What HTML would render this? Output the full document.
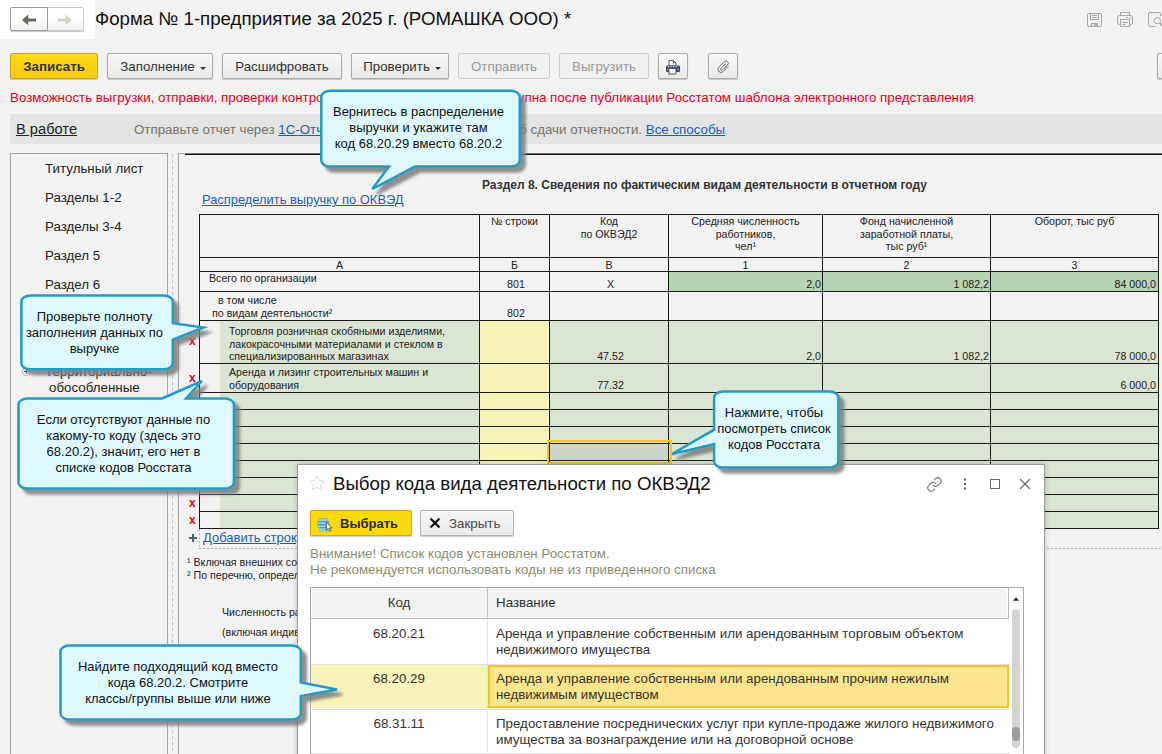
<!DOCTYPE html>
<html lang="ru">
<head>
<meta charset="utf-8">
<title>Форма № 1-предприятие</title>
<style>
html,body{margin:0;padding:0;}
body{width:1162px;height:754px;overflow:hidden;position:relative;background:#f2f2f2;font-family:"Liberation Sans",sans-serif;color:#222;}
.abs{position:absolute;}
#whitebox{left:0;top:0;width:95px;height:39px;background:#fff;}
.navbtn{top:7px;height:24px;border:1px solid #bdbdbd;background:linear-gradient(#ffffff 50%,#eeeeee);box-sizing:border-box;box-shadow:0 1px 0 #c8c8c8;}
#title{left:95px;top:8px;font-size:18.67px;line-height:22px;color:#111;white-space:nowrap;}
.btn{top:53px;height:26px;box-sizing:border-box;border:1px solid #a9a9a9;box-shadow:0 1px 1px #c4c4c4;border-radius:2px;background:linear-gradient(#f8f8f8,#e9e9e9);font-size:13.33px;line-height:25px;text-align:center;color:#333;white-space:nowrap;}
.btn.dis{color:#9a9a9a;border-color:#cdcdcd;background:#f0f0f0;box-shadow:none;}
.btn.yellow{background:linear-gradient(#fcdb18,#f7c910);border-color:#d3a21c;font-weight:bold;color:#333;}
.caret{display:inline-block;width:0;height:0;border-left:3px solid transparent;border-right:3px solid transparent;border-top:3px solid #333;vertical-align:middle;margin-left:5px;position:relative;top:1px;}
#redtext{left:10px;top:90px;font-size:13.33px;line-height:16px;color:#e1001a;white-space:nowrap;}
#statusbar{left:10px;top:114px;width:1152px;height:30px;background:#e4e4e4;}
#statusbar .s1{left:6px;top:7px;font-size:14.67px;line-height:17px;color:#222;text-decoration:underline;white-space:nowrap;}
#statusbar .s2{left:124px;top:8px;font-size:13.33px;line-height:16px;color:#74746a;white-space:nowrap;}
a,.lnk{color:#1b5fae;text-decoration:underline;}
#leftpanel{left:10px;top:153px;width:158px;height:610px;border:1px solid #a6a6a6;box-sizing:border-box;}
#leftpanel div{position:absolute;left:34px;font-size:13.33px;line-height:16px;color:#222;white-space:nowrap;}
#splitter{left:172px;top:153px;width:1px;height:610px;background:repeating-linear-gradient(180deg,transparent 0 1px,#c4bcc0 1px 4px,transparent 4px 6px);}
#rightpanel{left:178px;top:153px;width:1000px;height:610px;border:1px solid #a6a6a6;box-sizing:border-box;}
#thick{left:185px;top:153px;width:980px;height:2px;background:linear-gradient(#777 0 50%,#111 50% 100%);}
#sectitle{left:482px;top:178px;font-size:12px;font-weight:bold;line-height:15px;color:#333;white-space:nowrap;}
#distlink{left:202px;top:192px;font-size:12.9px;line-height:16px;white-space:nowrap;}
.t8{font-size:10.67px;line-height:12.5px;color:#222;}
.cell{position:absolute;box-sizing:border-box;}
.hl{position:absolute;height:1px;background:#1a1a1a;left:199px;width:960px;}
.vl{position:absolute;width:1px;background:#1a1a1a;top:214px;}
.ctr{text-align:center;}
.rgt{text-align:right;}
.redx{position:absolute;left:189px;font-size:12px;font-weight:bold;color:#e1001a;line-height:12px;}
.callout{position:absolute;box-sizing:border-box;border:2px solid #2a9bc1;border-radius:9px;background:#dcf7fd;font-size:13px;line-height:16px;color:#111;text-align:center;box-shadow:4px 4px 5px rgba(0,0,0,0.45);}

#dlg{left:297px;top:464px;width:748px;height:300px;background:#fff;border:1px solid #979d99;box-sizing:border-box;box-shadow:0 0 5px rgba(0,0,0,0.22);}
.dbtn{top:45px;height:26px;box-sizing:border-box;border:1px solid #b4b4b4;border-radius:2px;background:linear-gradient(#f8f8f8,#e9e9e9);font-size:13.33px;line-height:24px;color:#333;white-space:nowrap;box-shadow:0 1px 0 #cfcfcf;}
.dbtn.y{background:#fbdb0e;border-color:#dba70a;}
#lst{left:12px;top:122px;width:714px;height:180px;border:1px solid #a9a9a9;box-sizing:border-box;background:#fff;}
.lt{font-size:13.33px;line-height:16px;color:#333;white-space:nowrap;}
.ct{font-size:13px;line-height:16px;color:#111;text-align:center;white-space:nowrap;}
</style>
</head>
<body>
<div id="whitebox" class="abs"></div>
<div class="abs navbtn" style="left:10px;width:38px;border-radius:2px 0 0 2px;border-color:#9c9c9c;z-index:1;"></div>
<div class="abs navbtn" style="left:47px;width:37px;border-radius:0 2px 2px 0;border-color:#cfc6c6;"></div>
<svg class="abs" style="left:10px;top:7px;z-index:2" width="74" height="24" viewBox="0 0 74 23">
<path d="M12 12.400 L18.200 7 V10.900 H26 V13.900 H18.200 V17.800 Z" fill="#6e6862"/>
<path d="M61.700 12.400 L55.500 7 V10.900 H48 V13.900 H55.500 V17.800 Z" fill="#cdd5c8"/>
</svg>
<div id="title" class="abs">Форма № 1-предприятие за 2025 г. (РОМАШКА ООО) *</div>

<!-- top-right icons -->
<svg class="abs" style="left:1086px;top:11px" width="76" height="18" viewBox="0 0 76 18" fill="none" stroke="#a6a6a6" stroke-width="1">
<rect x="1.500" y="2.500" width="14" height="13" rx="1.500"/>
<rect x="4.500" y="2.500" width="8" height="6"/>
<path d="M6 4.500h5M6 6.500h5"/>
<rect x="5.500" y="12.500" width="6" height="3"/>
<rect x="8" y="13" width="3" height="2.500" fill="#b4b4b4" stroke="none"/>
<rect x="34.500" y="1.500" width="9" height="3"/>
<rect x="31.500" y="4.500" width="15" height="9" rx="2"/>
<rect x="34.500" y="8.500" width="9" height="7" fill="#f2f2f2"/>
<path d="M36.500 11.500h5.500M36.500 13.500h3M40 6.500h2M43 6.500h2"/>
<path d="M74.500 5V3a1.500 1.500 0 0 0-1.500-1.500H64a1.500 1.500 0 0 0-1.500 1.500V14a1.500 1.500 0 0 0 1.500 1.500H69.500"/>
<circle cx="71.400" cy="9.600" r="3.200" stroke="#b0aab0"/>
<path d="M73.800 12l3.200 3.400" stroke-width="1.800" stroke="#a8b0a4"/>
</svg>

<!-- toolbar -->
<div class="abs btn yellow" style="left:10px;width:88px;">Записать</div>
<div class="abs btn" style="left:107px;width:106px;padding-left:6px;">Заполнение<span class="caret"></span></div>
<div class="abs btn" style="left:222px;width:120px;">Расшифровать</div>
<div class="abs btn" style="left:351px;width:98px;padding-left:4px;">Проверить<span class="caret"></span></div>
<div class="abs btn dis" style="left:458px;width:92px;">Отправить</div>
<div class="abs btn dis" style="left:559px;width:90px;">Выгрузить</div>
<div class="abs btn" style="left:658px;width:30px;"></div>
<div class="abs btn" style="left:708px;width:30px;"></div>
<div class="abs btn" style="left:1157px;width:30px;"></div>
<svg class="abs" style="left:665px;top:59px" width="16" height="16" viewBox="0 0 16 16">
<path d="M4 7V1.500h4.500L11 4v3z" fill="#fff" stroke="#4a4a4a" stroke-width="0.900"/>
<path d="M8.500 1.500V4H11" fill="none" stroke="#4a4a4a" stroke-width="0.800"/>
<rect x="1" y="6.500" width="14" height="6.500" rx="1.200" fill="#454545"/>
<rect x="2.500" y="7" width="11" height="1.300" fill="#2a6fd0"/>
<path d="M3 7.650h10" stroke="#dfe9f8" stroke-width="1.300" stroke-dasharray="1 1.500"/>
<rect x="4" y="9.500" width="7" height="5.500" fill="#fff" stroke="#4a4a4a" stroke-width="0.900"/>
<rect x="2.300" y="9" width="1.200" height="3" fill="#8a8a8a"/><rect x="12.500" y="9" width="1.200" height="3" fill="#8a8a8a"/>
</svg>
<svg class="abs" style="left:716px;top:59px" width="14" height="15" viewBox="0 0 14 15" fill="none" stroke="#6c6762" stroke-width="1">
<path d="M9.800 5 L4.900 9.900 a1.100 1.100 0 0 0 1.600 1.600 L11.600 6.400 a2.250 2.250 0 0 0-3.200-3.200 L2.700 8.900 a3.050 3.050 0 0 0 4.300 4.300 L12.500 7.700" transform="translate(0,-0.500)"/>
</svg>

<div id="redtext" class="abs">Возможность выгрузки, отправки, проверки контрольных соотношений будет доступна после публикации Росстатом шаблона электронного представления</div>

<div id="statusbar" class="abs">
<div class="abs s1">В работе</div>
<div class="abs s2">Отправьте отчет через <span class="lnk">1С-Отчетность</span> - самый удобный способ сдачи отчетности. <span class="lnk">Все способы</span></div>
</div>

<div id="leftpanel" class="abs">
<div style="top:7px">Титульный лист</div>
<div style="top:36px">Разделы 1-2</div>
<div style="top:65px">Разделы 3-4</div>
<div style="top:94px">Раздел 5</div>
<div style="top:123px">Раздел 6</div>
<div style="top:152px">Раздел 7</div>
<div style="top:181px">Раздел 8</div>
<div style="top:210px;left:34px;">Территориально-</div><div style="top:226px;left:38px;">обособленные</div>
<svg style="position:absolute;left:10px;top:212px" width="10" height="10" viewBox="0 0 10 10"><circle cx="5.400" cy="5.500" r="4" fill="#fafafa" stroke="#b4b4b4"/><path d="M5.400 3v5M2.900 5.500h5" stroke="#556470" stroke-width="1"/></svg>
</div>
<div id="splitter" class="abs"></div>
<div id="rightpanel" class="abs"></div>
<div id="thick" class="abs"></div>
<div id="sectitle" class="abs">Раздел 8. Сведения по фактическим видам деятельности в отчетном году</div>
<div id="distlink" class="abs lnk">Распределить выручку по ОКВЭД</div>

<div id="tbl">
<div class="cell" style="left:669px;top:272px;width:489px;height:19px;background:#b7d4b5;"></div>
<div class="cell" style="left:220px;top:321px;width:938px;height:207px;background:#dbe5d3;"></div>
<div class="cell" style="left:480px;top:321px;width:69px;height:207px;background:#f8f4b8;"></div>
<div class="cell" style="left:549px;top:443px;width:120px;height:18px;background:#cfd5c6;"></div>
<div class="hl" style="top:214px"></div>
<div class="hl" style="top:257px"></div>
<div class="hl" style="top:271px"></div>
<div class="hl" style="top:291px"></div>
<div class="hl" style="top:320px"></div>
<div class="hl" style="top:363px"></div>
<div class="hl" style="top:392px"></div>
<div class="hl" style="top:409px"></div>
<div class="hl" style="top:426px"></div>
<div class="hl" style="top:443px"></div>
<div class="hl" style="top:460px"></div>
<div class="hl" style="top:477px"></div>
<div class="hl" style="top:494px"></div>
<div class="hl" style="top:511px"></div>
<div class="hl" style="top:528px"></div>
<div class="vl" style="left:199px;height:315px"></div>
<div class="vl" style="left:479px;height:315px"></div>
<div class="vl" style="left:549px;height:315px"></div>
<div class="vl" style="left:668px;height:315px"></div>
<div class="vl" style="left:822px;height:315px"></div>
<div class="vl" style="left:990px;height:315px"></div>
<div class="vl" style="left:1158px;height:315px"></div>
<div class="cell t8 ctr" style="left:480px;top:215px;width:69px;">№ строки</div>
<div class="cell t8 ctr" style="left:550px;top:215px;width:118px;">Код<br>по ОКВЭД2</div>
<div class="cell t8 ctr" style="left:669px;top:215px;width:153px;">Средняя численность<br>работников,<br>чел¹</div>
<div class="cell t8 ctr" style="left:823px;top:215px;width:167px;">Фонд начисленной<br>заработной платы,<br>тыс руб¹</div>
<div class="cell t8 ctr" style="left:991px;top:215px;width:167px;">Оборот, тыс руб</div>
<div class="cell t8 ctr" style="left:200px;top:259px;width:279px;">А</div>
<div class="cell t8 ctr" style="left:480px;top:259px;width:69px;">Б</div>
<div class="cell t8 ctr" style="left:550px;top:259px;width:118px;">В</div>
<div class="cell t8 ctr" style="left:669px;top:259px;width:153px;">1</div>
<div class="cell t8 ctr" style="left:823px;top:259px;width:167px;">2</div>
<div class="cell t8 ctr" style="left:991px;top:259px;width:167px;">3</div>
<div class="cell t8 " style="left:209px;top:272px;width:260px;">Всего по организации</div>
<div class="cell t8 ctr" style="left:480px;top:278px;width:69px;padding-left:3px;">801</div>
<div class="cell t8 ctr" style="left:550px;top:278px;width:118px;padding-left:3px;">Х</div>
<div class="cell t8 rgt" style="left:669px;top:278px;width:152px;">2,0</div>
<div class="cell t8 rgt" style="left:823px;top:278px;width:166px;">1 082,2</div>
<div class="cell t8 rgt" style="left:991px;top:278px;width:165px;">84 000,0</div>
<div class="cell t8 " style="left:218px;top:294px;width:260px;">в том числе</div>
<div class="cell t8 " style="left:212px;top:307px;width:260px;">по видам деятельности²</div>
<div class="cell t8 ctr" style="left:480px;top:307px;width:69px;padding-left:3px;">802</div>
<div class="cell t8 " style="left:229px;top:325px;width:250px;">Торговля розничная скобяными изделиями,<br>лакокрасочными материалами и стеклом в<br>специализированных магазинах</div>
<div class="cell t8 ctr" style="left:550px;top:350px;width:118px;padding-left:3px;">47.52</div>
<div class="cell t8 rgt" style="left:669px;top:350px;width:152px;">2,0</div>
<div class="cell t8 rgt" style="left:823px;top:350px;width:166px;">1 082,2</div>
<div class="cell t8 rgt" style="left:991px;top:350px;width:165px;">78 000,0</div>
<div class="cell t8 " style="left:229px;top:366px;width:250px;">Аренда и лизинг строительных машин и<br>оборудования</div>
<div class="cell t8 ctr" style="left:550px;top:379px;width:118px;padding-left:3px;">77.32</div>
<div class="cell t8 rgt" style="left:991px;top:379px;width:165px;">6 000,0</div>
<div class="redx" style="top:335px">x</div>
<div class="redx" style="top:372px">x</div>
<div class="redx" style="top:395px">x</div>
<div class="redx" style="top:412px">x</div>
<div class="redx" style="top:429px">x</div>
<div class="redx" style="top:446px">x</div>
<div class="redx" style="top:463px">x</div>
<div class="redx" style="top:480px">x</div>
<div class="redx" style="top:497px">x</div>
<div class="redx" style="top:514px">x</div>

<div class="cell" style="left:547px;top:440px;width:125px;height:24px;border:2px solid #f2c71c;"></div>
</div>

<!-- below table -->
<div class="abs" style="left:199px;top:548px;width:970px;height:1px;background:repeating-linear-gradient(90deg,#b4b4b4 0 2px,transparent 2px 4px);"></div>
<div class="abs" style="left:199px;top:529px;width:1px;height:20px;background:repeating-linear-gradient(180deg,#b4b4b4 0 2px,transparent 2px 4px);"></div>
<svg class="abs" style="left:188px;top:533px" width="10" height="10" viewBox="0 0 10 10"><path d="M5 1v8M1 5h8" stroke="#3a677a" stroke-width="2" fill="none"/></svg>
<div class="abs lnk" style="left:203px;top:530px;font-size:13px;line-height:16px;white-space:nowrap;">Добавить строку</div>
<div class="abs t8" style="left:187px;top:556px;white-space:nowrap;line-height:13px;">¹ Включая внешних совместителей<br>² По перечню, определенному</div>
<div class="abs t8" style="left:222px;top:606px;white-space:nowrap;">Численность работников</div>
<div class="abs t8" style="left:222px;top:626px;white-space:nowrap;">(включая индивидуальных</div>

<!-- dialog -->
<div id="dlg" class="abs">
<svg class="abs" style="left:10px;top:9px" width="18" height="18" viewBox="0 0 18 18"><path d="M9 2.2l2.1 4.5 4.9.6-3.6 3.4.9 4.9L9 13.2l-4.3 2.4.9-4.9L2 7.3l4.9-.6z" fill="none" stroke="#dcdcdc" stroke-width="1"/></svg>
<div class="abs" style="left:35px;top:8px;font-size:18.67px;line-height:22px;color:#111;white-space:nowrap;">Выбор кода вида деятельности по ОКВЭД2</div>
<svg class="abs" style="left:626px;top:9px" width="110" height="20" viewBox="0 0 110 20" fill="none" stroke="#6b655e" stroke-width="1">
<g transform="translate(2.500,2.400) scale(0.667)" stroke-width="1.6" stroke-linecap="round" stroke="#777069"><path d="M10 13a5 5 0 0 0 7.540.54l3-3a5 5 0 0 0-7.070-7.070l-1.720 1.710"/><path d="M14 11a5 5 0 0 0-7.540-.54l-3 3a5 5 0 0 0 7.070 7.070l1.710-1.710"/></g>
<g fill="#5e5a55" stroke="none"><rect x="40" y="4.500" width="2" height="2"/><rect x="40" y="9" width="2" height="2"/><rect x="40" y="13.500" width="2" height="2"/></g>
<rect x="66.500" y="5.500" width="9" height="9"/>
<path d="M96 5l10 10M106 5l-10 10" stroke-width="1.100"/>
</svg>
<div class="abs dbtn y" style="left:12px;width:102px;"><span style="position:absolute;left:29px;top:1px;font-weight:bold;font-size:13px;color:#2b2838;">Выбрать</span></div>
<svg class="abs" style="left:19px;top:53px" width="16" height="14" viewBox="0 0 16 14">
<path d="M2.500 0.500h8.500v3h1v6h-1v3.500H2.500V9.500H0.500V3.500h2z" fill="#8fd3f1" stroke="#5fb4dc" stroke-width="0.600"/>
<path d="M1 3.700h11M1 6.700h11M2.500 9.700h9" stroke="#3f86b8" stroke-width="0.900"/>
<path d="M9.300 4v8.200l2-1.700 1.300 2.900 1.300-.6-1.300-2.800h2.600z" fill="#fff" stroke="#3a3a3a" stroke-width="0.800"/>
</svg>
<div class="abs dbtn" style="left:122px;width:94px;"><span style="position:absolute;left:28px;top:1px;color:#4a4a4a;font-size:13.33px;">Закрыть</span></div>
<svg class="abs" style="left:131px;top:52px" width="12" height="12" viewBox="0 0 12 12"><path d="M1.5 1.5l9 9M10.500 1.5l-9 9" stroke="#111" stroke-width="2.2" fill="none"/></svg>
<div class="abs" style="left:12px;top:81px;font-size:13.33px;line-height:16px;color:#8d8d6e;white-space:nowrap;">Внимание! Список кодов установлен Росстатом.<br>Не рекомендуется использовать коды не из приведенного списка</div>
<div id="lst" class="abs">
<div class="abs" style="left:0;top:0;width:698px;height:31px;background:#f2f2f2;border-bottom:1px solid #bdbdbd;border-right:1px solid #bdbdbd;box-sizing:border-box;box-shadow:inset 1px 1px 0 #fff,inset -1px -1px 0 #fff;"></div>
<div class="abs" style="left:176px;top:0;width:1px;height:31px;background:#c4c4c4;"></div>
<div class="abs" style="left:176px;top:30px;width:0;height:140px;border-left:1px dotted #cfcfcf;"></div>
<div class="abs lt" style="left:0;top:7px;width:176px;text-align:center;">Код</div>
<div class="abs lt" style="left:185px;top:7px;">Название</div>
<div class="abs" style="left:0;top:76px;width:698px;height:1px;background:#e3e3e3;"></div>
<div class="abs" style="left:0;top:121px;width:698px;height:1px;background:#e3e3e3;"></div>
<div class="abs" style="left:0;top:77px;width:176px;height:43px;background:#f8f3b9;"></div>
<div class="abs" style="left:177px;top:77px;width:521px;height:43px;background:#fde58d;border:2px solid #f3c423;box-sizing:border-box;"></div>
<div class="abs" style="left:0;top:165px;width:698px;height:1px;background:#e3e3e3;"></div>
<div class="abs lt" style="left:0;top:38px;width:176px;text-align:center;">68.20.21</div>
<div class="abs lt" style="left:185px;top:38px;">Аренда и управление собственным или арендованным торговым объектом<br>недвижимого имущества</div>
<div class="abs lt" style="left:0;top:83px;width:176px;text-align:center;">68.20.29</div>
<div class="abs lt" style="left:185px;top:83px;">Аренда и управление собственным или арендованным прочим нежилым<br>недвижимым имуществом</div>
<div class="abs lt" style="left:0;top:128px;width:176px;text-align:center;">68.31.11</div>
<div class="abs lt" style="left:185px;top:128px;">Предоставление посреднических услуг при купле-продаже жилого недвижимого<br>имущества за вознаграждение или на договорной основе</div>
<svg class="abs" style="left:701px;top:8px" width="8" height="6" viewBox="0 0 8 6"><path d="M1 4.800L4 1.200l3 3.600z" fill="#222"/></svg>
<div class="abs" style="left:701px;top:21px;width:8px;height:139px;border-radius:4px;background:#d3d3d0;"></div>
<div class="abs" style="left:701px;top:139px;width:8px;height:14px;border-radius:4px;background:#9b9f9b;"></div>
</div>
</div>

<!-- callouts -->
<svg class="abs" style="left:0;top:0;pointer-events:none" width="1162" height="754" viewBox="0 0 1162 754">
<defs>
<filter id="sh" x="-10%" y="-10%" width="130%" height="140%"><feGaussianBlur in="SourceAlpha" stdDeviation="1.400"/><feOffset dx="4.800" dy="4.800" result="o"/><feFlood flood-color="#7c7c7c" flood-opacity="0.850"/><feComposite in2="o" operator="in"/><feMerge><feMergeNode/><feMergeNode in="SourceGraphic"/></feMerge></filter>
</defs>
<g fill="#ddf9fe" stroke="#229cc4" stroke-width="2.500" stroke-linejoin="miter" filter="url(#sh)">
<path d="M330.300 90.800H510.700A9 6 0 0 1 519.700 96.800V160.600A9 6 0 0 1 510.700 166.600H415.000L372.300 189.000L389.000 166.600H330.300A9 6 0 0 1 321.300 160.600V96.800A9 6 0 0 1 330.300 90.800Z"/>
<path d="M30.400 295.500H163.800A9 6 0 0 1 172.800 301.500V323.200L203.500 327.500L172.800 339.600V363.300A9 6 0 0 1 163.800 369.300H30.400A9 6 0 0 1 21.400 363.300V301.500A9 6 0 0 1 30.400 295.500Z"/>
<path d="M27.500 398.500H162.000L202.000 381.000L186.000 398.500H224.900A9 6 0 0 1 233.900 404.500V482.600A9 6 0 0 1 224.900 488.600H27.500A9 6 0 0 1 18.500 482.600V404.500A9 6 0 0 1 27.500 398.500Z"/>
<path d="M723.100 391.500H829.400A9 6 0 0 1 838.400 397.500V461.600A9 6 0 0 1 829.400 467.600H723.100A9 6 0 0 1 714.100 461.600V444.000L672.000 454.000L714.100 429.700V397.500A9 6 0 0 1 723.100 391.500Z"/>
<path d="M69.500 645.500H291.800A9 6 0 0 1 300.800 651.500V682.400L337.000 689.600L300.800 696.000V713.500A9 6 0 0 1 291.800 719.500H69.500A9 6 0 0 1 60.500 713.500V651.500A9 6 0 0 1 69.500 645.500Z"/>
</g>
</svg>
<div class="abs ct" style="left:319px;top:104px;width:199px;">Вернитесь в распределение<br>выручки и укажите там<br>код 68.20.29 вместо 68.20.2</div>
<div class="abs ct" style="left:18px;top:309px;width:153px;">Проверьте полноту<br>заполнения данных по<br>выручке</div>
<div class="abs ct" style="left:16px;top:412px;width:215px;">Если отсутствуют данные по<br>какому-то коду (здесь это<br>68.20.2), значит, его нет в<br>списке кодов Росстата</div>
<div class="abs ct" style="left:711px;top:405px;width:126px;">Нажмите, чтобы<br>посмотреть список<br>кодов Росстата</div>
<div class="abs ct" style="left:58px;top:659px;width:240px;">Найдите подходящий код вместо<br>кода 68.20.2. Смотрите<br>классы/группы выше или ниже</div>

</body>
</html>
